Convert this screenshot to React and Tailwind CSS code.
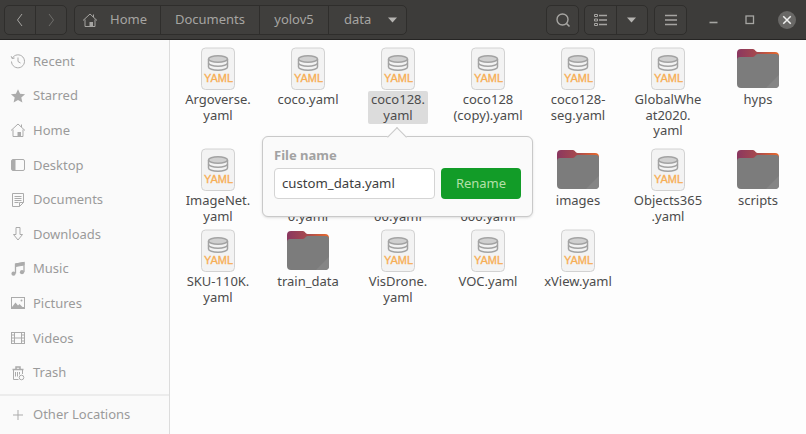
import React from 'react';

const FONT = "font-['Noto_Sans','Open_Sans',sans-serif]";

const files = [
    { name: 'Argoverse.\nyaml' },
    { name: 'coco.yaml' },
    { name: 'coco128.\nyaml', selected: true },
    { name: 'coco128\n(copy).yaml' },
    { name: 'coco128-\nseg.yaml' },
    { name: 'GlobalWhe\nat2020.\nyaml' },
    { name: 'hyps', folder: true },
    { name: 'ImageNet.\nyaml' },
    { name: '\n0.yaml' },
    { name: '\n00.yaml' },
    { name: '\n000.yaml' },
    { name: 'images', folder: true },
    { name: 'Objects365\n.yaml' },
    { name: 'scripts', folder: true },
    { name: 'SKU-110K.\nyaml' },
    { name: 'train_data', folder: true },
    { name: 'VisDrone.\nyaml' },
    { name: 'VOC.yaml' },
    { name: 'xView.yaml' },
];

const Svg = ({ children, size = 16, className = '' }) => (
    <svg width={size} height={size} viewBox="0 0 16 16" fill="none" stroke="currentColor" strokeWidth="1" className={className}>
        {children}
    </svg>
);

const icons = {
    recent: (
        <>
            <path d="M2.3 5.2A6.5 6.5 0 1 1 1.5 8.5" />
            <path d="M1.2 3.2l1 2.4 2.4-.6" />
            <path d="M8 4.5V8.5l2.5 1.5" />
        </>
    ),
    star: <path d="M8 1.2l2.1 4.6 5 .5-3.8 3.3 1.1 5L8 12l-4.4 2.6 1.1-5L.9 6.3l5-.5z" fill="currentColor" stroke="none" />,
    home: (
        <>
            <path d="M1 8.5L8 2l7 6.5" />
            <path d="M3 7.5V14.5H13V7.5" />
            <rect x="7.5" y="10" width="3.5" height="4.5" fill="currentColor" stroke="none" />
            <path d="M11.5 2.5V5" />
        </>
    ),
    desktop: (
        <>
            <rect x="1.5" y="2.5" width="13" height="11" rx="1.5" />
            <path d="M2 3h3.5v10H2z" fill="currentColor" stroke="none" />
        </>
    ),
    documents: (
        <>
            <path d="M2.5 1.5H13.5V10.5L9.5 14.5H2.5z" />
            <path d="M4.5 4.5h7M4.5 6.5h7M4.5 8.5h7M4.5 10.5h4" />
            <path d="M9.5 14.5V10.5H13.5" />
        </>
    ),
    downloads: <path d="M6 1.5h4v7h2.5L8 14 3.5 8.5H6z" />,
    music: (
        <>
            <path d="M5.5 12.5V3L14 1.5V11" strokeWidth="1.3" />
            <path d="M5.5 3L14 1.5V4L5.5 5.5z" fill="currentColor" />
            <circle cx="3.5" cy="12.7" r="2.1" fill="currentColor" stroke="none" />
            <circle cx="12" cy="11.2" r="2.1" fill="currentColor" stroke="none" />
        </>
    ),
    pictures: (
        <>
            <rect x="1.5" y="2.5" width="13" height="11" />
            <path d="M2 12l3.5-4.5 2.5 3 1.5-1.5 3 3z" fill="currentColor" stroke="none" />
            <circle cx="11.5" cy="5.5" r="1" fill="currentColor" stroke="none" />
            <rect x="1" y="12" width="14" height="2" fill="currentColor" stroke="none" />
        </>
    ),
    videos: (
        <>
            <rect x="1.5" y="2.5" width="13" height="11" />
            <path d="M4.5 2.5v11M11.5 2.5v11M4.5 8h7M1.5 5h3M1.5 8h3M1.5 11h3M11.5 5h3M11.5 8h3M11.5 11h3" />
        </>
    ),
    trash: (
        <>
            <path d="M2.5 4.5h11M6 4V2h4v2" strokeWidth="1.5" />
            <path d="M3.5 5v9.5h5M12.5 5v4" />
            <path d="M5.5 7v4.5M7.5 7v4.5M9.5 7v2.5" />
            <circle cx="11.5" cy="12.5" r="2.3" />
        </>
    ),
    plus: <path d="M8 3v10M3 8h10" />,
};

const places = [
    ['recent', 'Recent'],
    ['star', 'Starred'],
    ['home', 'Home'],
    ['desktop', 'Desktop'],
    ['documents', 'Documents'],
    ['downloads', 'Downloads'],
    ['music', 'Music'],
    ['pictures', 'Pictures'],
    ['videos', 'Videos'],
    ['trash', 'Trash'],
];

const SidebarRow = ({ icon, label, className = '' }) => (
    <div className={`flex items-center pl-[10px] gap-[7px] text-[#9a9a9a] ${className}`}>
        <Svg className="text-[#ababab] shrink-0">{icons[icon]}</Svg>
        <span className="text-[13px] leading-none">{label}</span>
    </div>
);

const YamlIcon = () => (
    <svg width="36" height="44" viewBox="0 0 36 44" className="block">
        <rect x="1.5" y="1" width="33" height="41.5" rx="4" fill="#f3f3f3" stroke="#d2d2d2" />
        <g fill="none" stroke="#a3a3a3" strokeWidth="1.5">
            <ellipse cx="18" cy="12" rx="9.5" ry="3.2" fill="#d0d0d0" />
            <path d="M8.500 12v8c0 1.800 4.300 3.200 9.500 3.200s9.500-1.400 9.500-3.200v-8" />
            <path d="M8.500 16c0 1.800 4.300 3.200 9.500 3.200s9.500-1.400 9.500-3.200" />
        </g>
        <text x="18.500" y="35" textAnchor="middle" fill="#f7ae55" stroke="#f7ae55" strokeWidth="0.3" fontFamily="Liberation Sans, sans-serif" fontSize="10" textLength="29" lengthAdjust="spacingAndGlyphs">YAML</text>
    </svg>
);

const FolderIcon = ({ id }) => (
    <svg width="44" height="42" viewBox="0 1 44 42" className="block">
        <defs>
            <linearGradient id={id} x1="0" y1="0" x2="1" y2="0">
                <stop offset="0" stopColor="#8a3760" />
                <stop offset="0.5" stopColor="#a84a4c" />
                <stop offset="1" stopColor="#ea6a2c" />
            </linearGradient>
        </defs>
        <path d="M1 6a4 4 0 0 1 4-4h12c2 0 2.500 3 4.500 3H39a4 4 0 0 1 4 4v8H1z" fill={`url(#${id})`} />
        <path d="M1 13a3 3 0 0 1 3-3h13c2 0 2.500-3 4.500-3H40a3 3 0 0 1 3 3v27a4 4 0 0 1-4 4H5a4 4 0 0 1-4-4z" fill="#7c7c7c" />
        <path d="M43 28v9a4 4 0 0 1-4 4h-9z" fill="#858585" />
    </svg>
);

const FileItem = ({ file, index }) => (
    <div className="flex flex-col items-center">
        <div className="h-[44px] flex items-center justify-center">
            {file.folder ? <FolderIcon id={`folder-${index}`} /> : <YamlIcon />}
        </div>
        <div className={`px-[3px] pt-[1px] text-center text-[13px] leading-[15.5px] whitespace-pre-line text-[#4c4c4c] rounded-[2px] ${file.selected ? 'bg-[#dcdcdc] pb-[1px]' : ''}`}>
            {file.name}
        </div>
    </div>
);

const HeaderButton = ({ className = '', children }) => (
    <div className={`h-[30px] flex items-center justify-center border border-[#2f2e2c] bg-[#403f3d] rounded-[5px] text-[#a6a5a2] ${className}`}>
        {children}
    </div>
);

const Caret = () => (
    <svg width="10" height="6" viewBox="0 0 10 6"><path d="M0 .5h9L4.500 5.500z" fill="#b5b4b1" /></svg>
);

export default function App() {
    return (
        <div className={`w-[806px] h-[434px] overflow-hidden flex flex-col bg-[#fdfdfd] ${FONT}`}>
            {/* Header */}
            <header className="h-[40px] shrink-0 flex items-center pl-[4px] bg-[#3d3c3a] border-b border-[#262524]">
                <HeaderButton className="w-[63px]">
                    <div className="flex-1 h-full flex items-center justify-center border-r border-[#2f2e2c]">
                        <Svg className="text-[#a6a5a2]"><path d="M10 2L5.500 8l4.500 6" /></Svg>
                    </div>
                    <div className="flex-1 h-full flex items-center justify-center">
                        <Svg className="text-[#6f6e6b]"><path d="M6 2l4.500 6L6 14" /></Svg>
                    </div>
                </HeaderButton>
                <HeaderButton className="w-[333px] ml-[7px] text-[13px] justify-start">
                    <div className="w-[86px] h-full flex items-center pl-[7px] gap-[12px] border-r border-[#2f2e2c]">
                        <Svg>{icons.home}</Svg>
                        <span>Home</span>
                    </div>
                    <div className="w-[99px] h-full flex items-center justify-center border-r border-[#2f2e2c]">Documents</div>
                    <div className="w-[69px] h-full flex items-center justify-center border-r border-[#2f2e2c]">yolov5</div>
                    <div className="flex-1 h-full flex items-center pl-[15px] gap-[17px]">
                        <span>data</span>
                        <Caret />
                    </div>
                </HeaderButton>
                <HeaderButton className="w-[33px] ml-[139px]">
                    <Svg>
                        <circle cx="7.500" cy="7.500" r="5.500" strokeWidth="1.400" />
                        <path d="M11.500 11.500l3 3" strokeWidth="1.600" />
                    </Svg>
                </HeaderButton>
                <HeaderButton className="w-[64px] ml-[5px]">
                    <div className="w-[32px] h-full flex items-center justify-center border-r border-[#2f2e2c]">
                        <Svg>
                            <path d="M6 3.500h8M6 8h8M6 12.500h8" strokeWidth="1.400" />
                            <path d="M1.500 2.500h3v2h-3zM1.500 7h3v2h-3zM1.500 11.500h3v2h-3z" strokeWidth="1" />
                        </Svg>
                    </div>
                    <div className="flex-1 flex items-center justify-center"><Caret /></div>
                </HeaderButton>
                <HeaderButton className="w-[33px] ml-[6px]">
                    <Svg><path d="M2 3.500h12M2 8h12M2 12.500h12" strokeWidth="1.300" /></Svg>
                </HeaderButton>
                <div className="w-[36px] ml-[9px] flex justify-center text-[#a6a5a2]">
                    <Svg><path d="M1.500 10.500h8" strokeWidth="1.600" transform="translate(2 0)" /></Svg>
                </div>
                <div className="w-[36px] flex justify-center text-[#a6a5a2]">
                    <Svg><rect x="4" y="4" width="7.500" height="7.500" strokeWidth="1.300" /></Svg>
                </div>
                <div className="w-[18px] h-[18px] ml-[10px] rounded-full bg-[#696866] flex items-center justify-center text-[#f0f0ef]">
                    <Svg size={12}><path d="M3 3l10 10M13 3L3 13" strokeWidth="2" /></Svg>
                </div>
            </header>

            <div className="flex-1 flex min-h-0">
                {/* Sidebar */}
                <aside className="w-[170px] shrink-0 flex flex-col bg-[#fafafa] border-r border-[#dcdcdc]">
                    <div className="pt-[4px]">
                        {places.map(([icon, label]) => (
                            <SidebarRow key={label} icon={icon} label={label} className="h-[34.6px]" />
                        ))}
                    </div>
                    <div className="h-[2px] mt-[4px] bg-[#ececec]" />
                    <SidebarRow icon="plus" label="Other Locations" className="h-[38px]" />
                </aside>

                {/* Files */}
                <main className="relative flex-1 min-w-0">
                    <div className="grid grid-cols-[repeat(7,90px)] grid-rows-[101px_81px_auto] pl-[3px] pt-[7px]">
                        {files.map((file, i) => (
                            <FileItem key={file.name} file={file} index={i} />
                        ))}
                    </div>

                    {/* Rename popover */}
                    <div className="absolute left-[92px] top-[96px] w-[271px] h-[81px] bg-[#fafafa] border border-[#c9c9c9] rounded-[6px] shadow-sm px-[11px] pt-[10px]">
                        <div className="absolute left-[127px] top-[-7px] w-[14px] h-[14px] rotate-45 bg-[#fafafa] border-l border-t border-[#c9c9c9]" />
                        <div className="relative text-[13px] font-bold leading-[16px] text-[#a2a2a2]">File name</div>
                        <div className="flex gap-[6px] mt-[5px]">
                            <div className="w-[161px] h-[31px] flex items-center px-[7px] bg-white border border-[#d4d4d4] rounded-[4px] text-[13.2px] text-[#3d3d3d]">custom_data.yaml</div>
                            <div className="w-[80px] h-[31px] flex items-center justify-center bg-[#129c28] rounded-[4px] text-[13px] text-[#b4e0a8]">Rename</div>
                        </div>
                    </div>
                </main>
            </div>
        </div>
    );
}
